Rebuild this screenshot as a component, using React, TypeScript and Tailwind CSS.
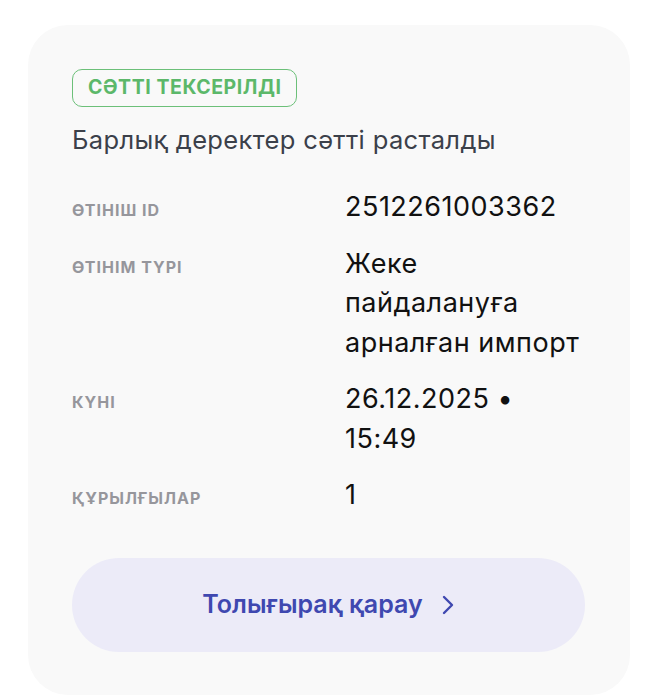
import React from "react";

const rows: { label: string; value: string }[] = [
  { label: "Өтініш ID", value: "2512261003362" },
  { label: "Өтінім түрі", value: "Жеке пайдалануға арналған импорт" },
  { label: "Күні", value: "26.12.2025 • 15:49" },
  { label: "Құрылғылар", value: "1" },
];

export default function App() {
  return (
    <div className="min-h-[700px] bg-white pt-[25px] pl-[28px]" style={{ fontFamily: "Inter, 'Noto Sans', sans-serif" }}>
      <div className="w-[602px] h-[670px] rounded-[40px] bg-[#f9f9f9] pt-[44px] px-[44px] flex flex-col">
        <div className="self-start h-[38px] px-[15px] rounded-[10px] border-[1.5px] border-[#6cc079] flex items-center text-[#5cb86a] text-[19.5px] font-bold uppercase tracking-[0.55px]">
          Сәтті тексерілді
        </div>
        <div className="mt-[17px] text-[25.5px] leading-[32px] text-[#3b404a] tracking-[0.35px]">
          Барлық деректер сәтті расталды
        </div>
        <div className="mt-[31px] flex flex-col gap-[17px]">
          {rows.map((r) => (
            <div key={r.label} className="flex items-baseline">
              <div className="w-[273px] shrink-0 text-[16px] font-bold uppercase text-[#96969c] tracking-[1px]">
                {r.label}
              </div>
              <div className="w-[240px] text-[27px] leading-[39.5px] text-[#111111] tracking-[0.5px]">
                {r.value}
              </div>
            </div>
          ))}
        </div>
        <button className="mt-[43px] h-[94px] w-[513px] rounded-full bg-[#ecebf8] flex items-center justify-center gap-[18px] text-[#3f48b0] text-[25px] font-semibold">
          <span>Толығырақ қарау</span>
          <svg width="14" height="22" viewBox="0 0 14 22" fill="none">
            <path d="M3 3l8 8-8 8" stroke="#3f48b0" strokeWidth="2.4" strokeLinecap="round" strokeLinejoin="round" />
          </svg>
        </button>
      </div>
    </div>
  );
}
